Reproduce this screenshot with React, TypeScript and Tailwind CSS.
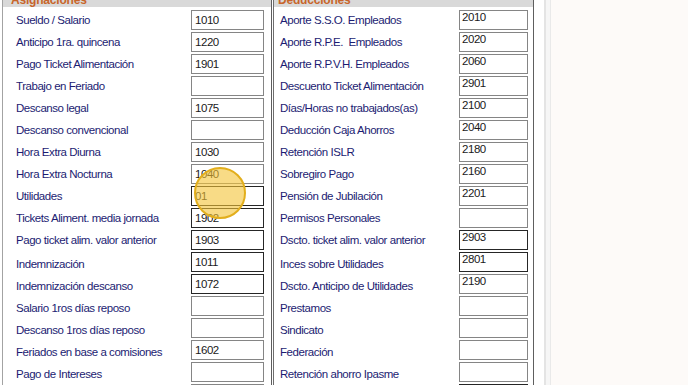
const ASIGNACIONES: [string, string, boolean][] = [
  ["Sueldo / Salario", "1010", false],
  ["Anticipo 1ra. quincena", "1220", false],
  ["Pago Ticket Alimentación", "1901", false],
  ["Trabajo en Feriado", "", false],
  ["Descanso legal", "1075", false],
  ["Descanso convencional", "", false],
  ["Hora Extra Diurna", "1030", false],
  ["Hora Extra Nocturna", "1040", false],
  ["Utilidades", "01", true],
  ["Tickets Aliment. media jornada", "1902", true],
  ["Pago ticket alim. valor anterior", "1903", true],
  ["Indemnización", "1011", true],
  ["Indemnización descanso", "1072", true],
  ["Salario 1ros días reposo", "", false],
  ["Descanso 1ros días reposo", "", false],
  ["Feriados en base a comisiones", "1602", false],
  ["Pago de Intereses", "", false],
  ["", "", false],
];

const DEDUCCIONES: [string, string, boolean][] = [
  ["Aporte S.S.O. Empleados", "2010", false],
  ["Aporte R.P.E.  Empleados", "2020", false],
  ["Aporte R.P.V.H. Empleados", "2060", false],
  ["Descuento Ticket Alimentación", "2901", false],
  ["Días/Horas no trabajados(as)", "2100", false],
  ["Deducción Caja Ahorros", "2040", false],
  ["Retención ISLR", "2180", false],
  ["Sobregiro Pago", "2160", false],
  ["Pensión de Jubilación", "2201", false],
  ["Permisos Personales", "", false],
  ["Dscto. ticket alim. valor anterior", "2903", true],
  ["Inces sobre Utilidades", "2801", true],
  ["Dscto. Anticipo de Utilidades", "2190", false],
  ["Prestamos", "", false],
  ["Sindicato", "", false],
  ["Federación", "", false],
  ["Retención ahorro Ipasme", "", false],
  ["", "", true],
];

function Row({
  label,
  value,
  dark,
  index,
  side,
}: {
  label: string;
  value: string;
  dark: boolean;
  index: number;
  side: "left" | "right";
}) {
  return (
    <div className="flex h-[22px] shrink-0 items-start">
      <span
        className={`flex-1 whitespace-pre leading-[20px] text-[#1c1c72] ${
          index >= 11 ? "pt-[2px]" : ""
        }`}
      >
        {label}
      </span>
      <div
        className={
          side === "left"
            ? `mr-[7px] h-[20px] w-[73px] border bg-white pl-[3px] leading-[18px] text-[#1a1a1a] ${
                dark ? "border-[#262626]" : "border-[#858585]"
              }`
            : `mr-[5px] h-[20px] w-[69px] border bg-white pl-[2px] leading-[13px] text-[#1a1a1a] ${
                dark ? "border-[#262626]" : "border-[#858585]"
              }`
        }
      >
        {value}
      </div>
    </div>
  );
}

function GroupBox({
  title,
  rows,
  side,
}: {
  title: string;
  rows: [string, string, boolean][];
  side: "left" | "right";
}) {
  return (
    <div
      className={`flex h-full flex-col overflow-hidden bg-white ${
        side === "left"
          ? "w-[270px] border-l border-r border-l-[#a3a3a3] border-r-[#5e5e5e]"
          : "w-[261px] border-l border-r border-l-[#6e6e6e] border-r-[#5e5e5e]"
      }`}
    >
      <div
        className={`h-[7px] shrink-0 overflow-hidden bg-[#d9d9d9] ${
          side === "left" ? "pl-[8px]" : "pl-[4px]"
        }`}
      >
        <div className="-mt-[7px] text-[12px] leading-[14px] font-bold tracking-[-0.2px] text-[#c8652a]">
          {title}
        </div>
      </div>
      <div
        className={`flex flex-col pt-[3px] ${
          side === "left" ? "pl-[13px]" : "pl-[6px]"
        }`}
      >
        {rows.map(([label, value, dark], i) => (
          <Row
            key={i}
            label={label}
            value={value}
            dark={dark}
            index={i}
            side={side}
          />
        ))}
      </div>
    </div>
  );
}

export default function App() {
  return (
    <div className="relative flex h-[385px] w-[688px] overflow-hidden bg-white font-['Liberation_Sans',Arial,sans-serif] text-[11.5px] tracking-[-0.45px]">
      <div className="w-[2px] shrink-0" />
      <GroupBox title="Asignaciones" rows={ASIGNACIONES} side="left" />
      <div className="w-[1px] shrink-0" />
      <GroupBox title="Deducciones" rows={DEDUCCIONES} side="right" />
      <div className="w-[10px] shrink-0 bg-white" />
      <div className="w-[2px] shrink-0 bg-[#e4e4e4]" />
      <div className="w-[4px] shrink-0 bg-[#f6f6f6]" />
      <div className="w-[1px] shrink-0 bg-[#e9e9e9]" />
      <div className="flex-1 bg-[#fdfaf8]" />
      {/* click highlight */}
      <div className="absolute top-[167px] left-[194px] h-[52px] w-[52px] rounded-full border-2 border-[#e2ae1c] bg-[#f3c335]/60" />
    </div>
  );
}
